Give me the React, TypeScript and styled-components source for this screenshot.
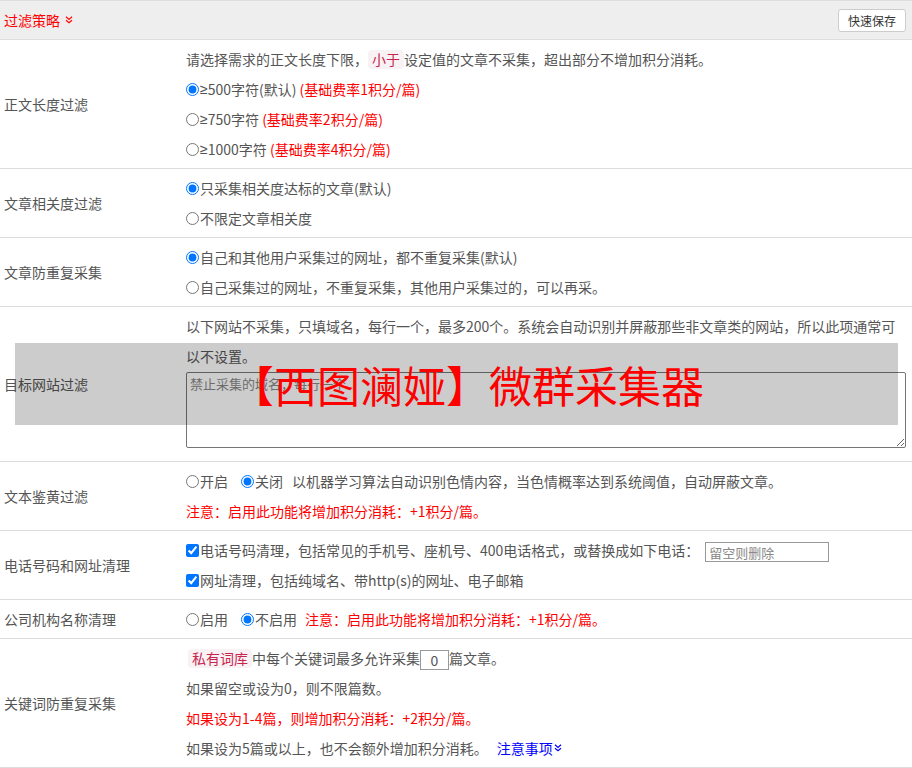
import styled, { createGlobalStyle } from "styled-components";

const GlobalStyle = createGlobalStyle`
    html {
        overflow: hidden;
    }
    body {
        margin: 0;
        font-family: "Noto Sans CJK SC", "Noto Sans", sans-serif;
        font-size: 14px;
        color: #555;
        background: #fff;
    }
`;

const Page = styled.div`
    position: relative;
    width: 100%;
`;

const Header = styled.div`
    display: flex;
    align-items: center;
    justify-content: space-between;
    height: 38px;
    padding: 0 6px 0 4px;
    background: #eee;
    border-top: 1px solid #ddd;
    border-bottom: 1px solid #ddd;
`;

const Title = styled.div`
    display: flex;
    align-items: center;
    gap: 5px;
    color: #f00;
    font-size: 14px;
`;

const SaveButton = styled.button`
    height: 23px;
    padding: 0 9px;
    border: 1px solid #ccc;
    border-radius: 3px;
    background: #fff;
    color: #333;
    font-family: inherit;
    font-size: 12px;
    margin-top: 1px;
`;

const Row = styled.div`
    display: grid;
    grid-template-columns: 186px 1fr;
    border-bottom: 1px solid #ddd;
`;

const Label = styled.div`
    display: flex;
    align-items: center;
    padding-left: 4px;
    color: #555;
`;

const Content = styled.div`
    padding: 4px 0;
    line-height: 30px;
`;

const Line = styled.div<{ $red?: boolean; $gapRight?: number }>`
    color: ${(p) => (p.$red ? "#f00" : "inherit")};
    padding-right: ${(p) => p.$gapRight ?? 0}px;
`;

const Option = styled.label<{ $space?: number }>`
    display: inline-flex;
    align-items: center;
    vertical-align: top;
    height: 30px;
    margin-right: ${(p) => p.$space ?? 0}px;
    input {
        margin: 0 1px 0 0;
        width: 13px;
        height: 13px;
    }
`;

const Sym = styled.span`
    font-family: "Liberation Sans", sans-serif;
`;

const Red = styled.span`
    color: #f00;
`;

const Tag = styled.span<{ $offset?: number }>`
    display: inline-block;
    line-height: 19px;
    padding: 0 4px;
    margin-left: ${(p) => p.$offset ?? 0}px;
    border-radius: 4px;
    background: #f9f2f4;
    color: #c7254e;
`;

const DomainBox = styled.textarea`
    display: block;
    box-sizing: border-box;
    width: calc(100% - 6px);
    height: 76px;
    margin: 1px 0 9px;
    padding: 2px 3px;
    border: 1px solid #767676;
    border-radius: 2px;
    font-family: inherit;
    font-size: 13px;
    line-height: 18px;
    color: #333;
    &::placeholder {
        color: #888;
    }
`;

const PhoneInput = styled.input`
    box-sizing: border-box;
    width: 124px;
    height: 20px;
    margin-left: 6px;
    padding: 0 3px;
    border: 1px solid #999;
    font-family: inherit;
    font-size: 13px;
    vertical-align: middle;
    &::placeholder {
        color: #888;
    }
`;

const CountInput = styled.input`
    box-sizing: border-box;
    width: 29px;
    height: 20px;
    padding: 0;
    border: 1px solid #999;
    font-family: inherit;
    font-size: 14px;
    color: #555;
    text-align: center;
    vertical-align: middle;
`;

const MoreLink = styled.a`
    display: inline-flex;
    align-items: center;
    vertical-align: top;
    height: 30px;
    gap: 1px;
    margin-left: 9px;
    color: #00f;
    text-decoration: none;
`;

const Watermark = styled.div`
    position: absolute;
    left: 15px;
    top: 343px;
    width: 883px;
    height: 82px;
    display: flex;
    align-items: center;
    padding-left: 216px;
    box-sizing: border-box;
    background: rgba(0, 0, 0, 0.2);
    color: #f00;
    font-size: 43px;
    line-height: 1;
    pointer-events: none;
`;

function DoubleDown({ color }: { color: string }) {
    return (
        <svg width="8" height="8" viewBox="0 0 8 8" fill="none" stroke={color} strokeWidth="1.2">
            <polyline points="1,0.8 4,3.4 7,0.8" />
            <polyline points="1,4.2 4,6.8 7,4.2" />
        </svg>
    );
}

function Radio({ name, checked }: { name: string; checked?: boolean }) {
    return <input type="radio" name={name} defaultChecked={checked} />;
}

export default function App() {
    return (
        <Page>
            <GlobalStyle />
            <Header>
                <Title>
                    过滤策略
                    <DoubleDown color="#f00" />
                </Title>
                <SaveButton>快速保存</SaveButton>
            </Header>

            <Row>
                <Label>正文长度过滤</Label>
                <Content>
                    <Line>
                        请选择需求的正文长度下限，<Tag>小于</Tag>设定值的文章不采集，超出部分不增加积分消耗。
                    </Line>
                    <Line>
                        <Option>
                            <Radio name="len" checked />
                            <Sym>≥</Sym>500字符(默认)&nbsp;<Red>(基础费率1积分/篇)</Red>
                        </Option>
                    </Line>
                    <Line>
                        <Option>
                            <Radio name="len" />
                            <Sym>≥</Sym>750字符&nbsp;<Red>(基础费率2积分/篇)</Red>
                        </Option>
                    </Line>
                    <Line>
                        <Option>
                            <Radio name="len" />
                            <Sym>≥</Sym>1000字符&nbsp;<Red>(基础费率4积分/篇)</Red>
                        </Option>
                    </Line>
                </Content>
            </Row>

            <Row>
                <Label>文章相关度过滤</Label>
                <Content>
                    <Line>
                        <Option>
                            <Radio name="rel" checked />只采集相关度达标的文章(默认)
                        </Option>
                    </Line>
                    <Line>
                        <Option>
                            <Radio name="rel" />不限定文章相关度
                        </Option>
                    </Line>
                </Content>
            </Row>

            <Row>
                <Label>文章防重复采集</Label>
                <Content>
                    <Line>
                        <Option>
                            <Radio name="dup" checked />自己和其他用户采集过的网址，都不重复采集(默认)
                        </Option>
                    </Line>
                    <Line>
                        <Option>
                            <Radio name="dup" />自己采集过的网址，不重复采集，其他用户采集过的，可以再采。
                        </Option>
                    </Line>
                </Content>
            </Row>

            <Row>
                <Label>目标网站过滤</Label>
                <Content>
                    <Line $gapRight={16}>
                        以下网站不采集，只填域名，每行一个，最多200个。系统会自动识别并屏蔽那些非文章类的网站，所以此项通常可以不设置。
                    </Line>
                    <DomainBox placeholder="禁止采集的域名，每行一个" />
                </Content>
            </Row>

            <Row>
                <Label>文本鉴黄过滤</Label>
                <Content>
                    <Line>
                        <Option $space={13}>
                            <Radio name="porn" />开启
                        </Option>
                        <Option $space={9}>
                            <Radio name="porn" checked />关闭
                        </Option>
                        以机器学习算法自动识别色情内容，当色情概率达到系统阈值，自动屏蔽文章。
                    </Line>
                    <Line $red>注意：启用此功能将增加积分消耗：+1积分/篇。</Line>
                </Content>
            </Row>

            <Row>
                <Label>电话号码和网址清理</Label>
                <Content>
                    <Line>
                        <Option>
                            <input type="checkbox" defaultChecked />电话号码清理，包括常见的手机号、座机号、400电话格式，或替换成如下电话：
                        </Option>
                        <PhoneInput placeholder="留空则删除" />
                    </Line>
                    <Line>
                        <Option>
                            <input type="checkbox" defaultChecked />网址清理，包括纯域名、带http(s)的网址、电子邮箱
                        </Option>
                    </Line>
                </Content>
            </Row>

            <Row>
                <Label>公司机构名称清理</Label>
                <Content>
                    <Line>
                        <Option $space={13}>
                            <Radio name="org" />启用
                        </Option>
                        <Option $space={8}>
                            <Radio name="org" checked />不启用
                        </Option>
                        <Red>注意：启用此功能将增加积分消耗：+1积分/篇。</Red>
                    </Line>
                </Content>
            </Row>

            <Row>
                <Label>关键词防重复采集</Label>
                <Content>
                    <Line>
                        <Tag $offset={2}>私有词库</Tag>中每个关键词最多允许采集<CountInput defaultValue="0" />篇文章。
                    </Line>
                    <Line>如果留空或设为0，则不限篇数。</Line>
                    <Line $red>如果设为1-4篇，则增加积分消耗：+2积分/篇。</Line>
                    <Line>
                        如果设为5篇或以上，也不会额外增加积分消耗。
                        <MoreLink href="#">
                            注意事项
                            <DoubleDown color="#00f" />
                        </MoreLink>
                    </Line>
                </Content>
            </Row>

            <Watermark>【西图澜娅】微群采集器</Watermark>
        </Page>
    );
}
